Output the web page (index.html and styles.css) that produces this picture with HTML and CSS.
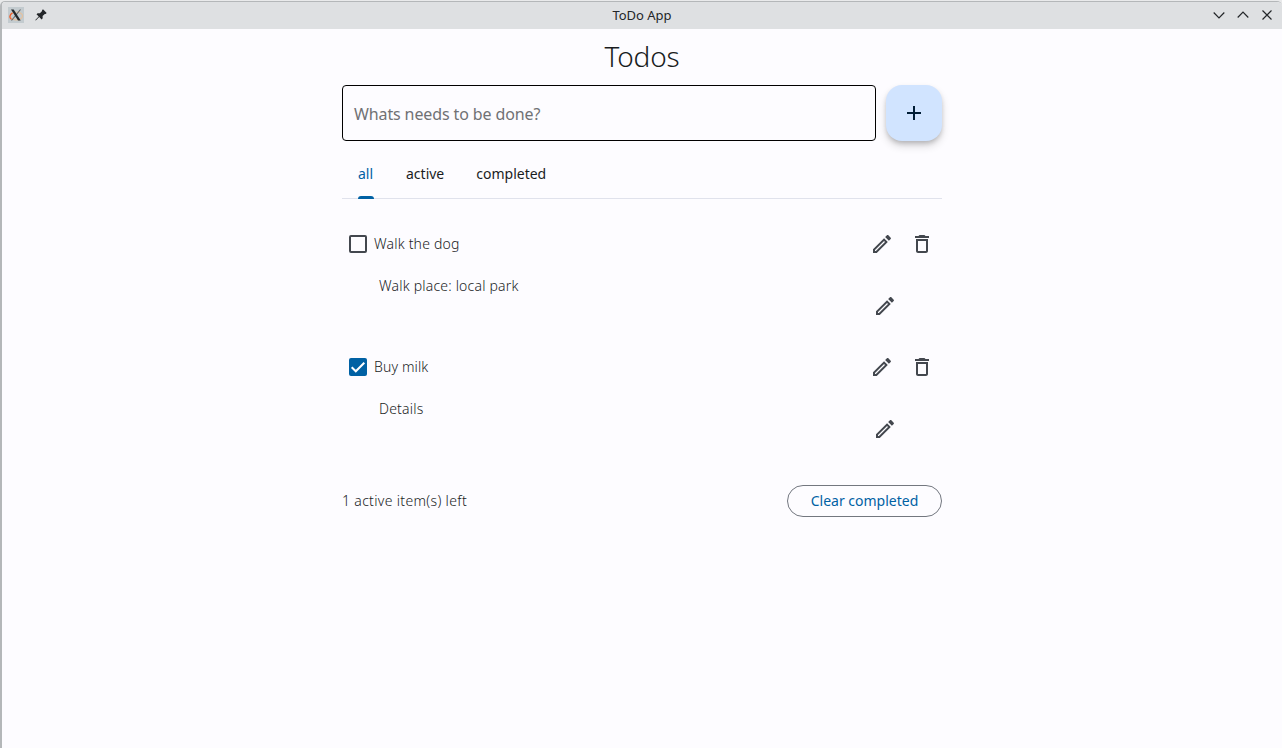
FILE: index.html
```html
<!DOCTYPE html>
<html lang="en">
<head>
<meta charset="utf-8">
<title>ToDo App</title>
<link rel="stylesheet" href="styles.css">
</head>
<body>
<svg class="defs" width="0" height="0">
  <symbol id="edit" viewBox="0 0 24 24"><path d="M14.06 9.02l.92.92L5.92 19H5v-.92l9.06-9.06M17.66 3c-.25 0-.51.1-.7.29l-1.83 1.83 3.75 3.75 1.83-1.83c.39-.39.39-1.02 0-1.41l-2.34-2.34c-.2-.2-.45-.29-.71-.29zm-3.6 3.19L3 17.25V21h3.75L17.81 9.94l-3.75-3.75z"/></symbol>
  <symbol id="trash" viewBox="0 0 24 24"><path d="M16 9v10H8V9h8m-1.5-6h-5l-1 1H5v2h14V4h-3.5l-1-1zM18 7H6v12c0 1.1.9 2 2 2h8c1.1 0 2-.9 2-2V7z"/></symbol>
</svg>
<div class="window">
  <header class="titlebar">
    <div class="side">
      <svg class="app-icon" width="16" height="16" viewBox="0 0 16 16"><rect width="16" height="16" fill="#c3cbcf"/><ellipse cx="8.500" cy="9" rx="6" ry="4" fill="none" stroke="#e6c09c" stroke-width="1.1"/><path d="M4.500 5.800C1.400 7.600 1 11 3.500 12.300" fill="none" stroke="#ee6030" stroke-width="1.400"/><path d="M12.500 2.500L3.500 13.500" stroke="#666" stroke-width="1.100"/><path d="M3 2.500h2.700l7 11H10z" fill="#222629"/></svg>
      <svg class="pin" width="12" height="12" viewBox="0 0 12 12"><path d="M8 .3L11.700 4l-1.100 1-.8-.1-2.200 2.200.1 2.200-1.100 1.100L4.200 8 .8 11.500l-.5-.5L3.700 7.500 1.500 5.300l1.100-1.100 2.300.1L7.100 2.100 7 1.300z" fill="#232629"/></svg>
    </div>
    <div class="caption">ToDo App</div>
    <div class="side controls">
      <svg width="12" height="12" viewBox="0 0 12 12"><path d="M.7 3.500L6 8.800l5.300-5.300"/></svg>
      <svg width="12" height="12" viewBox="0 0 12 12"><path d="M.7 8.500L6 3.200l5.300 5.300"/></svg>
      <svg width="12" height="12" viewBox="0 0 12 12"><path d="M1.500 1.500l9 9M10.500 1.500l-9 9"/></svg>
    </div>
  </header>
  <main class="app">
    <h1 class="title">Todos</h1>
    <div class="entry">
      <div class="field"><span class="hint">Whats needs to be done?</span></div>
      <button class="fab"><svg width="24" height="24" viewBox="0 0 24 24"><path d="M19 13h-6v6h-2v-6H5v-2h6V5h2v6h6z"/></svg></button>
    </div>
    <nav class="tabs">
      <div class="tab selected">all</div>
      <div class="tab">active</div>
      <div class="tab">completed</div>
    </nav>
    <section class="tasks">
      <article class="task">
        <div class="head"><span class="box"></span><span class="name">Walk the dog</span>
          <svg class="icon"><use href="#edit"/></svg><svg class="icon"><use href="#trash"/></svg></div>
        <div class="details"><p class="note">Walk place: local park</p><svg class="icon"><use href="#edit"/></svg></div>
      </article>
      <article class="task">
        <div class="head"><span class="box checked"><svg width="18" height="18" viewBox="0 0 18 18"><path d="M2.700 9.200l4.100 4.100 8.500-8.600"/></svg></span><span class="name name-short">Buy milk</span>
          <svg class="icon"><use href="#edit"/></svg><svg class="icon"><use href="#trash"/></svg></div>
        <div class="details"><p class="note">Details</p><svg class="icon"><use href="#edit"/></svg></div>
      </article>
    </section>
    <footer class="foot">
      <span class="count">1 active item(s) left</span>
      <button class="clear">Clear completed</button>
    </footer>
  </main>
</div>
</body>
</html>
```

FILE: styles.css
```css
* { box-sizing: border-box; }
body { margin: 0; background: #e9eaeb; font-family: "Noto Sans", "Open Sans", sans-serif; overflow: hidden; }
.defs { display: block; position: absolute; }
svg { display: block; flex: none; }
.window { height: 747px; margin-top: 1px; border: solid #b4b7b9; border-width: 1px 0 0 1.5px; border-left-width: 2px; border-radius: 5px 5px 0 0; background: #fdfcff; overflow: hidden; color: #1a1c1e; }
.titlebar { height: 27px; padding-bottom: 1px; display: flex; align-items: center; background: #dee0e2; color: #232629; }
.side { width: 80px; display: flex; align-items: center; gap: 11px; padding-left: 6px; }
.controls { justify-content: flex-end; gap: 12px; padding: 0 9px 0 0; }
.controls path { fill: none; stroke: #232629; stroke-width: 1.2; }
.caption { flex: 1; text-align: center; font-size: 13px; line-height: 18px; padding-bottom: 1px; }
.app { width: 600px; margin-left: 340px; }
.title { margin: 0; padding-top: 8px; height: 56px; font: 300 28px/38px "Noto Sans", sans-serif; letter-spacing: -.2px; text-align: center; }
.entry { display: flex; gap: 10px; }
.field { flex: 1; height: 56px; border: 1px solid #000; border-radius: 4px; padding: 2px 11px 0; display: flex; align-items: center; font-size: 16px; letter-spacing: -.12px; color: #707174; }
.fab { width: 56px; height: 56px; border: 0; border-radius: 16px; background: #d1e4ff; display: flex; align-items: center; justify-content: center; box-shadow: 0 3px 5px -1px rgba(0,0,0,.2), 0 5px 8px rgba(0,0,0,.14); }
.fab path { fill: #001d36; }
.tabs { display: flex; gap: 32px; height: 58px; padding: 10px 0 0 16px; box-shadow: inset 0 -1px #e0e2ec; font-size: 14px; }
.tab { height: 48px; padding-bottom: 4px; display: flex; align-items: center; }
.selected { position: relative; width: 16px; color: #0061a4; }
.selected::after { content: ""; position: absolute; left: 0; right: 0; bottom: 0; height: 3px; border-radius: 3px 3px 0 0; background: #0061a4; }
.tasks { padding-top: 25px; }
.task { height: 123px; font-size: 14px; font-weight: 300; letter-spacing: .2px; }
.head { height: 40px; display: flex; align-items: center; padding: 0 8px 0 7px; }
.box { width: 18px; height: 18px; border: 2px solid #43474e; border-radius: 2px; margin-right: 7px; }
.checked { border: 0; background: #0061a4; }
.checked path { fill: none; stroke: #fff; stroke-width: 2; }
.name { flex: 1; padding-bottom: 2px; }
.name-short { letter-spacing: .12px; }
.icon { width: 24px; height: 24px; fill: #43474e; }
.head .icon + .icon { margin-left: 16px; }
.details { height: 83px; padding: 0 45px 0 37px; display: flex; align-items: flex-start; justify-content: space-between; }
.details .icon { margin-top: 30px; }
.note { margin: 0; padding-top: 12px; line-height: 20px; }
.foot { display: flex; justify-content: space-between; align-items: center; height: 32px; margin-top: 15px; font-size: 14px; font-weight: 300; }
.count { padding-bottom: 2px; letter-spacing: .33px; }
.clear { width: 155px; height: 32px; border: 1px solid #73777f; border-radius: 16px; background: transparent; padding: 0; color: #0061a4; font: 400 14px/20px "Noto Sans", sans-serif; }
```
